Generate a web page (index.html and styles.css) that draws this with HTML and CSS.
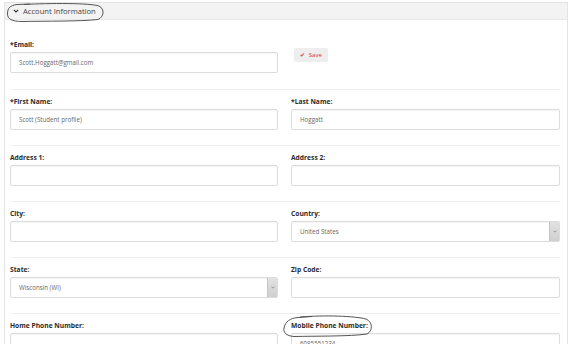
FILE: index.html
```html
<!DOCTYPE html>
<html lang="en">
<head>
    <meta charset="UTF-8">
    <title>Account Information</title>
    <link rel="stylesheet" href="styles.css">
</head>
<body>

    <div class="panel">
        <div class="panel-heading">
            <svg class="chevron" width="6" height="4" viewBox="0 0 6 4"><path d="M0.8 0.8 L3 3 L5.2 0.8" fill="none" stroke="#333" stroke-width="1.1"/></svg>
            <span>Account Information</span>
        </div>
        <div class="panel-body">

            <div class="row first">
                <div class="field">
                    <label>*Email:</label>
                    <div class="input">Scott.Hoggatt@gmail.com</div>
                </div>
                <div class="field">
                    <button class="btn-save"><span class="check">&#10004;</span> Save</button>
                </div>
            </div>

            <div class="row">
                <div class="field">
                    <label>*First Name:</label>
                    <div class="input">Scott (Student profile)</div>
                </div>
                <div class="field">
                    <label>*Last Name:</label>
                    <div class="input">Hoggatt</div>
                </div>
            </div>

            <div class="row">
                <div class="field">
                    <label>Address 1:</label>
                    <div class="input"></div>
                </div>
                <div class="field">
                    <label>Address 2:</label>
                    <div class="input"></div>
                </div>
            </div>

            <div class="row">
                <div class="field">
                    <label>City:</label>
                    <div class="input"></div>
                </div>
                <div class="field">
                    <label>Country:</label>
                    <div class="input select">United States<span class="arrow"><svg width="4" height="3" viewBox="0 0 4 3"><path d="M0.5 0.6 L2 2.2 L3.5 0.6" fill="none" stroke="#888" stroke-width="0.8"/></svg></span></div>
                </div>
            </div>

            <div class="row">
                <div class="field">
                    <label>State:</label>
                    <div class="input select">Wisconsin (WI)<span class="arrow"><svg width="4" height="3" viewBox="0 0 4 3"><path d="M0.5 0.6 L2 2.2 L3.5 0.6" fill="none" stroke="#888" stroke-width="0.8"/></svg></span></div>
                </div>
                <div class="field">
                    <label>Zip Code:</label>
                    <div class="input"></div>
                </div>
            </div>

            <div class="row">
                <div class="field">
                    <label>Home Phone Number:</label>
                    <div class="input"></div>
                </div>
                <div class="field">
                    <label>Mobile Phone Number:</label>
                    <div class="input">6085551234</div>
                </div>
            </div>

        </div>
    </div>

    <!-- pen marks drawn over the screenshot -->
    <svg class="marks" width="572" height="344" viewBox="0 0 572 344">
        <path d="M24 4.5 C50 3, 90 3, 99 6 C105 9, 104 17, 98 19.5 C80 21.5, 45 21, 22 21.5 C12 21.5, 7.5 19, 7.5 14 C7.5 8, 10 5.5, 17 4.5 L30 4" fill="none" stroke="#555" stroke-width="1"/>
        <path d="M300 317 C325 315, 355 316, 366 319 C373 322, 373 331, 367 334 C350 336.5, 315 336, 294 336.5 C286 336, 283 332, 284 328 C285 322, 290 318, 298 317.5 L312 316.5" fill="none" stroke="#555" stroke-width="1"/>
    </svg>

</body>
</html>
```

FILE: styles.css
```css
html, body {
    overflow: hidden;
}
body {
    margin: 0;
    background-color: #fff;
    font-family: 'Open Sans', sans-serif;
    color: #333;
}
.panel {
    width: 564px;
    box-sizing: border-box;
    margin: 2px 0 0 4px;
    border: 1px solid #e4e4e4;
    border-bottom: none;
    height: 400px;
}
.panel-heading {
    height: 16px;
    background-color: #f3f3f3;
    border-bottom: 1px solid #e8e8e8;
    display: flex;
    align-items: center;
    padding-left: 8px;
    font-size: 7.6px;
    color: #444;
}
.chevron {
    margin-right: 4px;
}
.panel-body {
    padding: 0 7px 0 5px;
}
.row {
    display: grid;
    grid-template-columns: 268px 269px;
    column-gap: 13px;
    padding: 7px 0 15px;
    border-bottom: 1px solid #eeeeee;
}
.row.first {
    padding-top: 20px;
    padding-bottom: 16px;
}
label {
    display: block;
    font-size: 6.7px;
    font-weight: bold;
    line-height: 10px;
    margin-bottom: 2px;
    color: #2b2b2b;
}
.input {
    position: relative;
    height: 21px;
    box-sizing: border-box;
    border: 1px solid #dcdcdc;
    border-radius: 2px;
    box-shadow: inset 0 1px 1px rgba(0,0,0,0.04);
    padding-left: 8px;
    font-size: 6.2px;
    line-height: 19px;
    color: #666;
}
.select .arrow {
    position: absolute;
    top: 0;
    right: 0;
    bottom: 0;
    width: 9px;
    background: linear-gradient(#e2e2e2, #cfcfcf);
    border-left: 1px solid #c4c4c4;
    display: flex;
    align-items: center;
    justify-content: center;
}
.btn-save {
    margin: 3px 0 0 3px;
    width: 34px;
    height: 14px;
    padding: 0;
    border: none;
    border-radius: 2px;
    background-color: #eeeeee;
    color: #d9333f;
    font-family: 'Open Sans', sans-serif;
    font-size: 6px;
}
.btn-save .check {
    font-size: 6px;
    margin-right: 2px;
}
.marks {
    position: absolute;
    top: 0;
    left: 0;
    pointer-events: none;
}
```
